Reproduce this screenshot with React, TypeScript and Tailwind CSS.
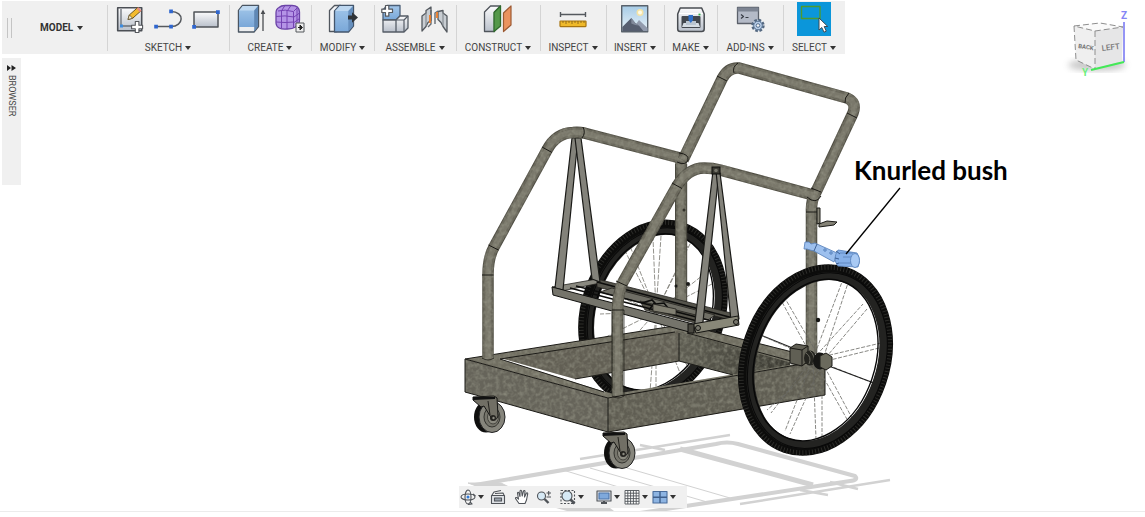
import React from "react";

type Tool = { name: string; icon: React.ReactNode; active?: boolean };
type Group = { label: string; width: string; tools: Tool[] };

const Caret = () => (
  <svg viewBox="0 0 6 4" className="h-1 w-1.5 shrink-0 fill-[#333]" aria-hidden="true">
    <path d="M0 0h6L3 4z" />
  </svg>
);

const Glyph = ({ children }: { children: React.ReactNode }) => (
  <svg viewBox="0 0 34 34" className="h-full w-full" fill="none" strokeLinejoin="round" aria-hidden="true">
    {children}
  </svg>
);

const dot = "#2f66cf";

const SketchIcon = (
  <Glyph>
    <rect x="4.7" y="5.7" width="24" height="23" fill="url(#steel)" stroke="#4b4f55" strokeWidth="1.6" />
    <path d="M8 7v17h17" stroke="#6a7079" strokeWidth="1.3" />
    <rect x="7" y="22.5" width="3" height="3" fill="#3c8be0" />
    <path d="M15 17.5l1.4-4.6 8.2-7.3 3.2 3.4-8.2 7.3z" fill="#f3bb2f" stroke="#6b5623" strokeWidth="1" />
    <path d="M15 17.5l1.4-4.6 3.2 3.4z" fill="#f7ecd0" stroke="#5a4a2a" strokeWidth=".7" />
    <path d="M24.5 6l3.2 3.3" stroke="#e38b80" strokeWidth="2.4" />
    <path d="M22.3 19.5h3.6v3.7h3.7v3.6h-3.7v3.7h-3.6v-3.7h-3.7v-3.6h3.7z" fill="#fff" stroke="#55585d" strokeWidth="1.1" />
  </Glyph>
);
const LineIcon = (
  <Glyph>
    <path d="M5 24.5h15c13 0 14-15 0-15" stroke="#55595e" strokeWidth="1.5" />
    <path d="M3.2 22.7h3.7v3.7H3.2zM18.2 22.7h3.7v3.7h-3.7zM18.2 7.5h3.7v3.7h-3.7z" fill={dot} />
  </Glyph>
);
const RectIcon = (
  <Glyph>
    <rect x="5" y="10" width="24" height="15" fill="url(#steel)" stroke="#4f5358" strokeWidth="1.5" />
    <path d="M27 8.200h3.800v3.800H27zM3.200 23h3.800v3.800H3.200z" fill={dot} />
  </Glyph>
);
const ExtrudeIcon = (
  <Glyph>
    <path d="M4.500 8.500l4-5h16v21l-4.500 5.500H4.500z" fill="#eceef0" stroke="#4a5562" strokeWidth="1.4" />
    <path d="M5 8.500l4-4.500h15v20l-3.500 1H5z" fill="url(#blue)" />
    <path d="M5 8.500l3.800-4.500H24l-3.800 4.500z" fill="#bfd9f1" />
    <path d="M20.200 8.500L24 4v20.500l-3.800 5z" fill="#5f88b5" />
    <path d="M29 29V9" stroke="#4a4d51" strokeWidth="1.3" />
    <path d="M26.700 12L29 7.500l2.300 4.500z" fill="#4a4d51" />
  </Glyph>
);
const FormIcon = (
  <Glyph>
    <path d="M4 11q0-4 3-5.500Q9 3.500 13 3.500h7q7 0 7.500 6.500v8q0 5-4 7-3 2-8 2-11 1-11.500-6z" fill="#b494e6" stroke="#6a43a6" strokeWidth="1.300" />
    <path d="M6 9Q13 7 21 9.500M4 14.500q9-1.500 18 .500M4 20q9 1 18 0M9.500 8.500v17.500M15 8.500v18.500M21.500 9.500v16.500M21.500 9.500l4-4M22 15l5.500-4M22 20.500l5.500-4M10 8l3-4.500M15.500 8.500L19 3.500M25 6.500v17" stroke="#7443b3" strokeWidth="1" />
    <rect x="24" y="21" width="8" height="9" fill="#eee" stroke="#55585c" />
    <path d="M26 25.500h3M28 23l2.500 2.500L28 28z" fill="#222" stroke="#222" />
  </Glyph>
);
const ModifyIcon = (
  <Glyph>
    <path d="M3.500 8.500l5-5h6l-4 5.500v20.500h-7z" fill="#f3f4f6" stroke="#50565e" strokeWidth="1.300" />
    <path d="M8.500 9l5-5.500h14v20.500l-5 6h-14z" fill="url(#blue)" stroke="#44566c" strokeWidth="1.300" />
    <path d="M9 9l4.700-5H27l-4.700 5z" fill="#bdd7f0" />
    <path d="M22.300 9L27 4v20l-4.700 5.500z" fill="#668fbd" />
    <path d="M22 13.500h4v-3.300l6 5.300-6 5.300v-3.300h-4z" fill="#2f3337" />
  </Glyph>
);
const ComponentIcon = (
  <Glyph>
    <path d="M4 17V8l4-4.500h13V14l-4 4H4z" fill="url(#blue)" stroke="#4b5f77" strokeWidth="1.300" />
    <path d="M4 18h13v12H4zM17 18l4-4h8v12l-4 4h-8z" fill="url(#steel)" stroke="#555c66" strokeWidth="1.300" />
    <path d="M17 18h8v12M25 18l4-4" stroke="#555c66" strokeWidth="1.200" />
    <path d="M6.500 3.500h3.300v3.700h3.700v3.300H9.800v3.700H6.500v-3.700H2.800V7.200h3.700z" fill="#fff" stroke="#55585d" strokeWidth="1.200" />
  </Glyph>
);
const JointIcon = (
  <Glyph>
    <path d="M5 14l4-3V8.500l5-3.500v13.500l-3 2-2 4-4 4.500zM30 14l-4-3V8.500l-5 1v8l3 3 2 4 4 5.500z" fill="#c8cdd2" stroke="#555a60" strokeWidth="1.300" />
    <path d="M9 11v13M26 11v13" stroke="#7b8187" />
    <path d="M14 8v14l-3 3M21 9l-3 2v11" stroke="#656b71" strokeWidth="1.400" />
    <path d="M13 13v8M20 10v6" stroke="#ee7d29" strokeWidth="1.800" />
  </Glyph>
);
const PlaneIcon = (
  <Glyph>
    <path d="M3.500 10l6-6h10l-6 6v19.500h-10z" fill="url(#steel)" stroke="#50555c" strokeWidth="1.300" />
    <path d="M13 10.500l6.500-6.500v20L13 29.500z" fill="#54984a" stroke="#2f6b2c" strokeWidth="1.300" />
    <path d="M22.500 11l7.500-7v19l-7.500 6.500z" fill="#eb935f" stroke="#9d5a33" strokeWidth="1.200" />
  </Glyph>
);
const MeasureIcon = (
  <Glyph>
    <path d="M4.500 10v5M29.500 10v5M5 12.500h24" stroke="#55595e" strokeWidth="1.400" />
    <rect x="4" y="19" width="26" height="5.600" rx=".5" fill="#efb92a" stroke="#a8750f" strokeWidth="1.200" />
    <path d="M7 19v2M10 19v3M13 19v2M16 19v3M19 19v2M22 19v3M25 19v2M28 19v2" stroke="#7d5b16" strokeWidth=".8" />
  </Glyph>
);
const PictureIcon = (
  <Glyph>
    <rect x="3.700" y="3.700" width="26" height="26" fill="url(#sky)" stroke="#59626c" strokeWidth="1.400" />
    <circle cx="22" cy="10.500" r="3.500" fill="#f5e3a5" />
    <circle cx="22" cy="10.500" r="2" fill="#fffbe6" />
    <path d="M13 29l8-11 8.500 8V29z" fill="#929bad" />
    <path d="M4.300 25l9-9 4 5 4 3 4 5H4.300z" fill="#565e6f" />
    <path d="M13.300 16l4 5 3 2.500-3-.5-4-1.500z" fill="#818a9b" />
  </Glyph>
);
const PrintIcon = (
  <Glyph>
    <path d="M3.700 12l2.500-6h21.500l2.500 6v15q0 2.500-2.500 2.500H6.200q-2.500 0-2.500-2.500z" fill="url(#steel)" stroke="#484c51" strokeWidth="1.500" />
    <path d="M5 11.500h24" stroke="#fff" />
    <rect x="7.500" y="14" width="19" height="12" rx="1" fill="#43484f" />
    <path d="M9.500 21h15l1.500 4H8z" fill="#d5dce3" />
    <path d="M12 19h10v4H12z" fill="#b9c4d0" />
    <path d="M14.500 13h4.500v5l-2.200 3-2.300-3z" fill="#2f6fc7" />
    <path d="M24.500 12.500h2" stroke="#2fae49" strokeWidth="1.800" />
  </Glyph>
);
const ScriptIcon = (
  <Glyph>
    <rect x="4.500" y="5.500" width="21" height="16" fill="#b4bac7" stroke="#5b606a" strokeWidth="1.300" />
    <rect x="4.500" y="5.500" width="21" height="4" fill="#7d8492" />
    <path d="M8 12.500l2.500 2-2.500 2M12.500 15.500h3" stroke="#383d46" strokeWidth="1.200" />
    <circle cx="25" cy="23.500" r="5.500" fill="#c8d9ee" stroke="#53677f" strokeWidth="2.400" strokeDasharray="2.600 1.700" />
    <circle cx="25" cy="23.500" r="4.300" fill="#b7cce6" stroke="#56708f" />
    <circle cx="25" cy="23.500" r="1.800" fill="#f4f6f8" stroke="#56708f" />
  </Glyph>
);
const PickIcon = (
  <Glyph>
    <rect x="4.500" y="4.500" width="18.500" height="12" stroke="#4d9a2f" strokeWidth="1.400" />
    <path d="M22 16v12l2.800-2.500 2.200 4.700 2.300-1-2.100-4.700h3.600z" fill="#fff" stroke="#3c4a56" strokeWidth="1" />
  </Glyph>
);

const groups: Group[] = [
  {
    label: "SKETCH",
    width: "w-[122px]",
    tools: [
      { name: "Create sketch", icon: SketchIcon },
      { name: "Line", icon: LineIcon },
      { name: "Rectangle", icon: RectIcon },
    ],
  },
  {
    label: "CREATE",
    width: "w-[82px]",
    tools: [
      { name: "Extrude", icon: ExtrudeIcon },
      { name: "Create form", icon: FormIcon },
    ],
  },
  { label: "MODIFY", width: "w-[63px]", tools: [{ name: "Press pull", icon: ModifyIcon }] },
  {
    label: "ASSEMBLE",
    width: "w-[82px]",
    tools: [
      { name: "New component", icon: ComponentIcon },
      { name: "Joint", icon: JointIcon },
    ],
  },
  { label: "CONSTRUCT", width: "w-[84px]", tools: [{ name: "Offset plane", icon: PlaneIcon }] },
  { label: "INSPECT", width: "w-[66px]", tools: [{ name: "Measure", icon: MeasureIcon }] },
  { label: "INSERT", width: "w-[58px]", tools: [{ name: "Attached canvas", icon: PictureIcon }] },
  { label: "MAKE", width: "w-[53px]", tools: [{ name: "3D print", icon: PrintIcon }] },
  { label: "ADD-INS", width: "w-[66px]", tools: [{ name: "Scripts", icon: ScriptIcon }] },
  { label: "SELECT", width: "w-[62px]", tools: [{ name: "Select tool", icon: PickIcon, active: true }] },
];

function Toolbar() {
  return (
    <header className="mt-px ml-0.5 flex h-[53px] w-fit bg-[#f0f0f0] font-['Roboto',sans-serif]">
      <div className="flex w-[105px] items-center">
        <span className="ml-[5px] h-5 w-[5px] border-x border-[#c4c4c4]" />
        <button className="ml-7 flex items-center gap-1 text-[10px] font-bold text-[#333]">
          MODEL <Caret />
        </button>
      </div>
      {groups.map((g) => (
        <section key={g.label} className={"relative flex flex-col items-center pt-px " + g.width}>
          <span className="absolute top-1 left-0 h-[46px] w-px bg-[#d4d4d4]" />
          <div className="flex gap-1">
            {g.tools.map((t) => (
              <button key={t.name} aria-label={t.name} className={t.active ? "size-[34px] bg-[#0b96da]" : "size-[34px]"}>
                {t.icon}
              </button>
            ))}
          </div>
          <button className="mt-1 flex h-4 items-center gap-[3px] text-[10px] whitespace-nowrap text-[#444]">
            {g.label} <Caret />
          </button>
        </section>
      ))}
    </header>
  );
}

function ViewCube() {
  return (
    <svg viewBox="1060 5 80 75" className="absolute top-[5px] right-[5px] h-[75px] w-20" fontFamily="Roboto, sans-serif" fontWeight="bold" aria-label="View cube">
      <ellipse cx="1097" cy="65" rx="29" ry="6" fill="#777" opacity=".4" filter="url(#soft)" />
      <path d="M1074 26l26-3 23 4-28 4z" fill="#fafafa" />
      <path d="M1074 26l21 5v38l-19-9z" fill="#efefef" />
      <path d="M1095 31l28-4-1 34-27 8z" fill="#e6e6e7" />
      <path d="M1074 26l26-3 23 4-28 4zM1095 31v38M1074 26l2 34 19 9" fill="none" stroke="#8e8e8e" strokeDasharray="6 3" />
      <text x="1078" y="48" fontSize="6" fill="#777" transform="rotate(8 1078 48)">
        BACK
      </text>
      <text x="1102" y="51" fontSize="8" fill="#777" transform="rotate(-7 1102 51)" fontWeight="500">
        LEFT
      </text>
      <path d="M1124 22v40" stroke="#7272f2" strokeWidth="1.500" />
      <path d="M1091 70l33-8" stroke="#43e957" strokeWidth="2" />
      <text x="1121" y="19" fontSize="10" fill="#8585f5">Z</text>
      <text x="1082" y="76" fontSize="10" fill="#6bf07c">Y</text>
    </svg>
  );
}

const spokes = [
  [782, 302], [786, 300], [842, 282], [848, 283], [863, 304], [867, 309], [881, 343], [879, 348],
  [873, 383], [852, 418], [848, 421], [822, 437], [816, 439], [790, 434], [785, 431], [767, 410], [771, 413], [760, 335],
];
const rearSpokes = [
  [622, 245], [628, 241], [653, 238], [661, 236], [692, 240], [688, 246], [712, 268], [714, 283],
  [603, 290], [600, 314], [604, 338], [612, 362], [650, 392], [656, 392], [684, 383], [692, 374],
];

function Wheel({ cx, cy, s }: { cx: number; cy: number; s: number }) {
  return (
    <g transform={`translate(${cx} ${cy}) rotate(19)`} fill="none">
      <ellipse rx={68 * s} ry={91.500 * s} stroke="#0c0c0b" strokeWidth={13 * s} />
      <ellipse rx={71.500 * s} ry={95 * s} stroke="#2c2c29" strokeWidth={5 * s} strokeDasharray="1 2.200" />
      <ellipse cx={1.500 * s} rx={63.500 * s} ry={86.500 * s} stroke="#232321" strokeWidth={8 * s} />
      <ellipse rx={59.500 * s} ry={83 * s} stroke="#070707" strokeWidth="1.400" />
      <ellipse cx={2 * s} rx={67 * s} ry={90 * s} stroke="#080808" strokeWidth="1" />
    </g>
  );
}

function Tube({ d }: { d: string }) {
  return (
    <g fill="none" strokeLinejoin="round">
      <path d={d} stroke="#4e4c42" strokeWidth="11.500" />
      <path d={d} stroke="#69675b" strokeWidth="9.500" />
      <path d={d} stroke="#7a786b" strokeWidth="5.500" />
    </g>
  );
}

function Caster({ x, y }: { x: number; y: number }) {
  return (
    <g transform={`translate(${x} ${y})`}>
      <ellipse cx="-3" rx="12" ry="15.500" fill="#0f0f0e" />
      <ellipse cx="3" cy="0" rx="13" ry="15.500" fill="#86857c" stroke="#222" />
      <ellipse cx="3" cy="0" rx="8" ry="10" fill="#76756c" stroke="#33332e" />
      <ellipse cx="4" cy="0" rx="5.500" ry="7" fill="#8b8a80" stroke="#44433d" />
      <path d="M-16-20l21-1 3 2 1 18q-2 6-6 3L-5-11l-3 1-8-7z" fill="#716f65" stroke="#161614" />
      <path d="M-16-20l22 0v2l-22 1z" fill="#111" />
      <path d="M-1-16l2 14" stroke="#24231f" />
      <circle cx="4" cy="1" r="3" fill="#24231f" />
      <circle cx="4.500" cy="1" r="1.200" fill="#8b8a80" />
    </g>
  );
}

function Bar({ points }: { points: string }) {
  return <polygon points={points} fill="#83827a" stroke="#1a1a17" strokeWidth="1.200" strokeLinejoin="round" />;
}

function Cart() {
  return (
    <svg viewBox="21 58 1124 453" className="block h-auto min-w-0 flex-1" aria-label="Hand cart model">
      <g fill="none" stroke="#d2d2d2" strokeLinejoin="round">
        <path d="M475 485L716 444Q727 441 738 444L855 476Q859 480 850 481L640 513" strokeWidth="4" />
        <path d="M680 449L813 485" strokeWidth="5" />
        <path d="M580 459L730 435M640 445l25 5M740 504L890 480M830 482l28 7M800 490l28 5" strokeWidth="2.500" />
        <path d="M563 470L625 489M590 468L707 502M627 468L730 498" strokeWidth="1" />
        <path d="M468 483h33l8 4h-30z" fill="#d2d2d2" strokeWidth="1" />
        <path d="M556 508l54 0 8 6h-40z" fill="#d2d2d2" stroke="none" />
      </g>

      <g stroke="#77766f" strokeWidth=".8" strokeDasharray="5 1.500">
        {rearSpokes.map(([x, y]) => (
          <path key={`${x}-${y}`} d={`M656 312L${x} ${y}`} />
        ))}
      </g>
      <Wheel cx={653} cy={312} s={0.965} />

      <g filter="url(#grain)">
        <polygon points="500,358 679,330 679,361 575,379" fill="#625f54" />
        <polygon points="679,330 790,358 790,366 733,375 679,361" fill="url(#inner)" />
        <path d="M465 359L680 325L698 328L825 360L608 398ZM500 359L602 391L614 394L795 364L679 331Z" fillRule="evenodd" fill="#716f62" />
        <Tube d="M681 158V318" />
      </g>
      <g fill="none" stroke="#1d1c18">
        <path d="M465 359L674 326M688 326L698 328L800 354M500 359L675 332M687 333L795 362M679 333V361L575 379M679 361L733 375M500 359L604 392" />
      </g>
      <path d="M675.500 164V318M686.700 164V318" stroke="#4a493f" />
      <circle cx="684" cy="210" r="1.500" fill="#33322b" />
      <circle cx="688" cy="284" r="2" fill="#1a1a18" />
      <circle cx="676" cy="286" r="1.500" fill="#1a1a18" />

      <g stroke="#23221e" strokeWidth=".8">
        <polygon points="552,287 597,279 605,282 562,291" fill="#8a8980" />
        <polygon points="597,279 735,314 735,321 597,287" fill="#55544c" />
        <polygon points="612,288 715,315 708,320 600,292" fill="#6f6e65" />
        <polygon points="640,301 700,316 695,323 645,310" fill="#55534a" />
        <path d="M642 303l10-3 4 4 8-1 4 5M655 302l-6 8M570 288L705 323M576 286L712 321M597 282L733 318" fill="none" stroke="#0d0d0c" strokeWidth="1.600" />
        <polygon points="653,304 676,309 676,315 653,311" fill="#817f72" />
      </g>
      <Bar points="572,138 578,138 563,290 555,288" />
      <Bar points="575,138 581,138 600,282 592,279" />
      <polygon points="552,287 553,295 693,333 693,324" fill="#75746b" stroke="#11110f" />

      <g filter="url(#grain)">
        <polygon points="465,359 608,398 608,432 465,392" fill="#66645a" />
        <polygon points="608,398 825,360 825,395 608,432" fill="#605e53" />
        <Tube d="M488 359V275Q488 258 494 247L547 150Q556 133 573 132.500Q579 132 584 133L684 159" />
        <Tube d="M683 160L722 79Q728 67 739 68L847 98Q857 102 853 113L816 192Q811 200 811.500 212V354" />
        <Tube d="M617.500 396V310Q618 292 623 282L677 186Q688 168 704 168Q713 168 720 170L813 195" />
      </g>
      <g fill="none" stroke="#1b1a16">
        <path d="M465 359L608 398V432L465 392ZM608 398L825 360V395L608 432" />
        <path d="M482 275h11.500M488.500 245l10 5M542 147l10 5.500M583 127q3 6-1 11M679 153q10 1 9 7-2 6-11 2M717 76l10 5M738 63q-6 4-4 10M849 93q-5 5-4 10M847 113l10 5M811 188l10 4M807 197q9 8 14-1M806 212h11.500M672 183l10 5.500M616 281l11 5M612 310h12" />
        <path d="M482 358q6 4 12 0M612 396q6 4 12 0M612 388V312M624 396V310" strokeWidth=".7" />
      </g>

      <Bar points="713,171 719,172 702,331 694,330" />
      <Bar points="716,171 720,173 739,319 731,321" />
      <polygon points="693,324 738,316 739,325 696,333" fill="#888778" stroke="#161613" />
      <rect x="688" y="324" width="6" height="9" fill="#4a4941" stroke="#11110f" />
      <circle cx="698" cy="328" r="2.500" fill="#77766c" stroke="#11110f" />
      <circle cx="736" cy="322" r="2.500" fill="#77766c" stroke="#11110f" />
      <rect x="712" y="167" width="8" height="7" fill="#3b3a33" stroke="#0c0c0b" />
      <circle cx="716" cy="170.500" r="1.800" fill="#77766c" />

      <path d="M817 208h3v15l-3 1zM819 224l8-3 10 1-3 3-15 2z" fill="#858377" stroke="#1a1a17" />
      <circle cx="818" cy="320" r="2.200" fill="#161614" />

      <path d="M753 332L795 349" stroke="#222" strokeWidth="1.200" />
      <g stroke="#6a6964" strokeWidth=".8" strokeDasharray="4 1.500">
        {spokes.map(([x, y], i) => (
          <path key={`${x}-${y}`} d={`M${i % 2 ? 822 : 813} ${i % 2 ? 362 : 359}L${x} ${y}`} />
        ))}
      </g>
      <path d="M826 365L874 383" stroke="#222" strokeWidth="1.200" />
      <polygon points="790,348 796,344 808,346 808,361 802,366 790,363" fill="#605f54" stroke="#191815" />
      <path d="M790 348l12 2 6-4M802 350v16" fill="none" stroke="#191815" />
      <ellipse cx="810" cy="358" rx="6" ry="7.500" fill="#24241f" />
      <path d="M806 353q6 4 3 11M810 351q6 5 3 13" stroke="#6a695f" fill="none" />
      <ellipse cx="820" cy="361" rx="7" ry="8.500" fill="#161614" />
      <polygon points="820,356 826,353 832,357 832,366 826,370 820,367" fill="#6b6a5d" stroke="#1d1c18" />
      <Wheel cx={815.5} cy={360} s={1} />

      <Caster x={489} y={417} />
      <Caster x={619} y={453} />

      <g stroke="#5d86bd" strokeWidth=".9">
        <path d="M805 242l4 0 2 2 4-1 2 1 20 9-3 9-20-11-4-1-3-1-3 0z" fill="#9dc0ee" />
        <path d="M817 244l-3 7" fill="none" stroke="#33568a" />
        <path d="M838 250l19 3q4 6 1 14l-20-1q-6-7 0-16z" fill="#86b0e8" />
        <path d="M840 253h13M839 263h14M843 257h10" fill="none" />
        <ellipse cx="855" cy="260.500" rx="4.500" ry="7" fill="#a9caf4" />
        <path d="M836 251l4 3M835 258l4 1M836 264l3-1" stroke="#33568a" />
        <circle cx="825" cy="250" r="1.300" fill="#7ba5dd" />
        <circle cx="831" cy="253" r="1.300" fill="#7ba5dd" />
      </g>
      <path d="M900 188L846 254" stroke="#000" strokeWidth="1.300" />
      <text x="854" y="180" fontFamily="Lato, sans-serif" fontWeight="bold" fontSize="26" fill="#000">
        Knurled bush
      </text>
    </svg>
  );
}

const NavGlyph = ({ children }: { children: React.ReactNode }) => (
  <svg viewBox="0 0 16 16" className="size-4" fill="none" stroke="#4f5358" strokeWidth="1.100" strokeLinejoin="round" aria-hidden="true">
    {children}
  </svg>
);

const views = [
  {
    name: "Orbit", menu: true, gap: "",
    icon: (
      <>
        <ellipse cx="8" cy="8" rx="7" ry="3" />
        <ellipse cx="8" cy="8" rx="3" ry="7" />
        <circle cx="8" cy="8" r="1.500" fill="#2f7ad8" stroke="none" />
        <path d="M10 13l2 2-4 .5M13 5l2.500 2" />
      </>
    ),
  },
  {
    name: "Look at", menu: false, gap: "ml-1.5",
    icon: (
      <>
        <path d="M1.500 6.500h13v8h-13z" fill="#dfe2e6" />
        <path d="M2 6l2-3 7-1.500M5 4.500l8-.5 1 2" />
        <path d="M4.500 9h7v3h-7z" fill="#9aa3ad" />
      </>
    ),
  },
  {
    name: "Pan", menu: false, gap: "ml-2",
    icon: (
      <path d="M5 14.500L1.500 9.500q0-1.500 1.500-.8l1.500 1.500L3.500 4q.5-1.400 1.500 0l1 3.500L6 2q.8-1.400 1.600 0l.6 5L9.500 2q1-1 1.500.3L10.500 8l2-4q1.200-.6 1.200.8L12.500 11l-1.500 3.500z" fill="#fff" />
    ),
  },
  {
    name: "Zoom", menu: false, gap: "ml-1.5",
    icon: (
      <>
        <circle cx="5.500" cy="7" r="4" fill="#d6e9f5" />
        <path d="M8.500 10l4 4" strokeWidth="2.400" />
        <path d="M10.500 4h4.500M12.700 2v4.500M10.500 8h4.500" />
      </>
    ),
  },
  {
    name: "Fit", menu: true, gap: "ml-2",
    icon: (
      <>
        <path d="M1 1.500h13.500v13H1z" strokeDasharray="2 1.500" />
        <circle cx="7" cy="7" r="5" fill="#d6e9f5" />
        <path d="M10.500 10.500l4 4" strokeWidth="2.600" />
      </>
    ),
  },
  {
    name: "Display settings", menu: true, gap: "ml-3",
    icon: (
      <>
        <path d="M1 2h14v10H1z" fill="#dfe3e8" />
        <path d="M3 4h10v6H3z" fill="#7fa9dc" stroke="#4d74a8" />
        <path d="M5 14h6M8 12v2" strokeWidth="2" />
      </>
    ),
  },
  {
    name: "Grid and snaps", menu: true, gap: "ml-1",
    icon: <path d="M1 1.500h14v13.500H1zM3.800 1.500V15M6.600 1.500V15M9.400 1.500V15M12.200 1.500V15M1 4.200h14M1 6.900h14M1 9.600h14M1 12.300h14" fill="#fff" strokeWidth=".9" />,
  },
  {
    name: "Viewports", menu: true, gap: "ml-1",
    icon: (
      <>
        <path d="M1 2.500h14v11.500H1z" fill="#8db4e2" stroke="#4a6d9c" />
        <path d="M8 2.500V14M1 8.200h14" stroke="#3f5f8b" strokeWidth="1.400" />
      </>
    ),
  },
];

function NavBar() {
  return (
    <nav className="absolute bottom-[3px] left-1/2 flex h-[22px] w-[228px] -translate-x-1/2 items-center bg-[#f0f0f0] pl-px">
      {views.map((v) => (
        <button key={v.name} aria-label={v.name} className={"flex shrink-0 items-center gap-0.5 " + v.gap}>
          <NavGlyph>{v.icon}</NavGlyph>
          {v.menu && <Caret />}
        </button>
      ))}
    </nav>
  );
}

export default function App() {
  return (
    <div className="relative min-h-screen overflow-hidden bg-white">
      <svg className="absolute size-0" aria-hidden="true">
        <defs>
          <linearGradient id="steel" x1="0" y1="0" x2="0" y2="1">
            <stop offset="0" stopColor="#fbfbfc" />
            <stop offset="1" stopColor="#b9c0cb" />
          </linearGradient>
          <linearGradient id="blue" x1="0" y1="0" x2="0" y2="1">
            <stop offset="0" stopColor="#a3c7ea" />
            <stop offset="1" stopColor="#79a7d8" />
          </linearGradient>
          <linearGradient id="sky" x1="0" y1="0" x2="0" y2="1">
            <stop offset="0" stopColor="#a6cbe6" />
            <stop offset="1" stopColor="#eaf3f8" />
          </linearGradient>
          <linearGradient id="inner" x1="0" x2="1">
            <stop offset="0" stopColor="#5f5e53" />
            <stop offset="1" stopColor="#3b3a32" />
          </linearGradient>
          <filter id="soft">
            <feGaussianBlur stdDeviation="3" />
          </filter>
          <filter id="grain" filterUnits="userSpaceOnUse" x="440" y="58" width="440" height="400" colorInterpolationFilters="sRGB">
            <feTurbulence type="fractalNoise" baseFrequency=".25" numOctaves="2" seed="4" />
            <feColorMatrix values="0 0 0 0 .6  0 0 0 0 .6  0 0 0 0 .54  1.200 0 0 0 -.45" />
            <feComposite in2="SourceGraphic" operator="in" result="speck" />
            <feMerge>
              <feMergeNode in="SourceGraphic" />
              <feMergeNode in="speck" />
            </feMerge>
          </filter>
        </defs>
      </svg>
      <Toolbar />
      <ViewCube />
      <main className="relative mt-1 flex items-start border-b border-[#ececec]">
        <aside className="ml-0.5 flex h-[127px] w-[19px] shrink-0 flex-col items-center bg-[#f0f0f0] pt-[7px]">
          <button className="flex flex-col items-center gap-1 font-['Roboto',sans-serif] text-[9px] leading-3 text-[#444]">
            <svg viewBox="0 0 9 6" className="h-1.5 w-[9px] fill-[#222]" aria-hidden="true">
              <path d="M0 0l4 3-4 3zM4.500 0l4.500 3-4.500 3z" />
            </svg>
            <span className="[writing-mode:vertical-rl]">BROWSER</span>
          </button>
        </aside>
        <Cart />
        <NavBar />
      </main>
    </div>
  );
}
